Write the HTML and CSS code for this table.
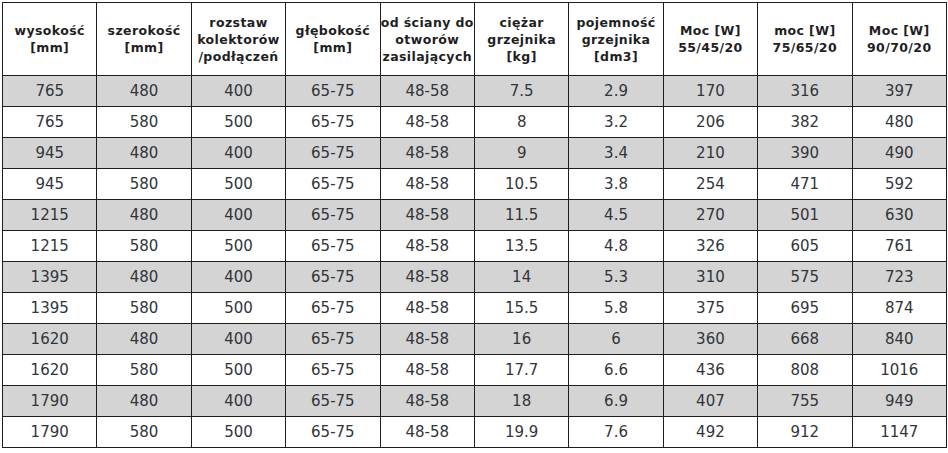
FILE: index.html
```html
<!DOCTYPE html>
<html lang="pl">
<head>
<meta charset="utf-8">
<link rel="stylesheet" href="styles.css">
</head>
<body>
<table class="spec">
  <thead>
    <tr>
      <th>wysokość<br>[mm]</th>
      <th>szerokość<br>[mm]</th>
      <th>rozstaw<br>kolektorów<br>/podłączeń</th>
      <th>głębokość<br>[mm]</th>
      <th>od ściany do<br>otworów<br>zasilających</th>
      <th>ciężar<br>grzejnika<br>[kg]</th>
      <th>pojemność<br>grzejnika<br>[dm3]</th>
      <th>Moc [W]<br>55/45/20</th>
      <th>moc [W]<br>75/65/20</th>
      <th>Moc [W]<br>90/70/20</th>
    </tr>
  </thead>
  <tbody>
    <tr class="alt"><td>765</td><td>480</td><td>400</td><td>65-75</td><td>48-58</td><td>7.5</td><td>2.9</td><td>170</td><td>316</td><td>397</td></tr>
    <tr><td>765</td><td>580</td><td>500</td><td>65-75</td><td>48-58</td><td>8</td><td>3.2</td><td>206</td><td>382</td><td>480</td></tr>
    <tr class="alt"><td>945</td><td>480</td><td>400</td><td>65-75</td><td>48-58</td><td>9</td><td>3.4</td><td>210</td><td>390</td><td>490</td></tr>
    <tr><td>945</td><td>580</td><td>500</td><td>65-75</td><td>48-58</td><td>10.5</td><td>3.8</td><td>254</td><td>471</td><td>592</td></tr>
    <tr class="alt"><td>1215</td><td>480</td><td>400</td><td>65-75</td><td>48-58</td><td>11.5</td><td>4.5</td><td>270</td><td>501</td><td>630</td></tr>
    <tr><td>1215</td><td>580</td><td>500</td><td>65-75</td><td>48-58</td><td>13.5</td><td>4.8</td><td>326</td><td>605</td><td>761</td></tr>
    <tr class="alt"><td>1395</td><td>480</td><td>400</td><td>65-75</td><td>48-58</td><td>14</td><td>5.3</td><td>310</td><td>575</td><td>723</td></tr>
    <tr><td>1395</td><td>580</td><td>500</td><td>65-75</td><td>48-58</td><td>15.5</td><td>5.8</td><td>375</td><td>695</td><td>874</td></tr>
    <tr class="alt"><td>1620</td><td>480</td><td>400</td><td>65-75</td><td>48-58</td><td>16</td><td>6</td><td>360</td><td>668</td><td>840</td></tr>
    <tr><td>1620</td><td>580</td><td>500</td><td>65-75</td><td>48-58</td><td>17.7</td><td>6.6</td><td>436</td><td>808</td><td>1016</td></tr>
    <tr class="alt"><td>1790</td><td>480</td><td>400</td><td>65-75</td><td>48-58</td><td>18</td><td>6.9</td><td>407</td><td>755</td><td>949</td></tr>
    <tr><td>1790</td><td>580</td><td>500</td><td>65-75</td><td>48-58</td><td>19.9</td><td>7.6</td><td>492</td><td>912</td><td>1147</td></tr>
  </tbody>
</table>
</body>
</html>
```

FILE: styles.css
```css
html, body {
  margin: 0;
  padding: 0;
  background: #ffffff;
}

.spec {
  margin: 2px 0 0 2px;
  width: 945px;
  table-layout: fixed;
  border-collapse: collapse;
  font-family: "DejaVu Sans", "Liberation Sans", sans-serif;
}

.spec th,
.spec td {
  border: 1px solid #1e1e1e;
  text-align: center;
  vertical-align: middle;
  padding: 0;
  white-space: nowrap;
}

.spec th {
  height: 72px;
  font-size: 12.5px;
  font-weight: bold;
  line-height: 17px;
  letter-spacing: 0.4px;
  color: #1f1f1f;
}

.spec td {
  height: 30px;
  font-size: 15px;
  color: #31353b;
}

.spec tr.alt td {
  background: #d4d4d4;
}
```
